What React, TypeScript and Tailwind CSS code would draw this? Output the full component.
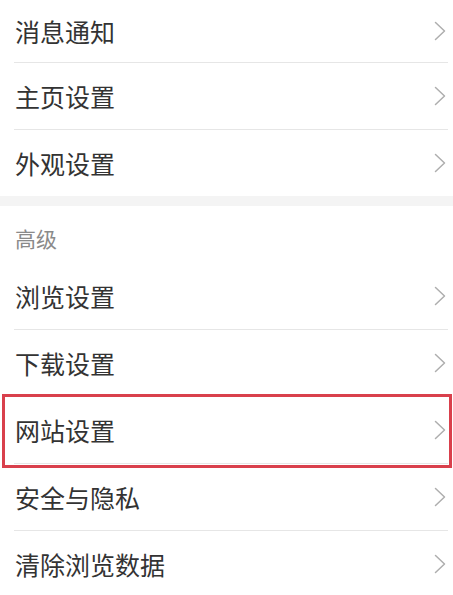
import React from "react";

const Chevron = () => (
  <svg width="12" height="20" viewBox="0 0 12 20" className="shrink-0">
    <polyline points="1.5,1.5 10.5,10 1.5,18.5" fill="none" stroke="#aeaeae" strokeWidth="1.5" strokeLinecap="round" strokeLinejoin="round" />
  </svg>
);

const Row = ({ label, h = "h-[66px]", highlight = false }: { label: string; h?: string; highlight?: boolean }) => (
  <div className={`relative flex items-center justify-between pl-[15px] pr-[7px] ${h}`}>
    <span className="text-[25px] leading-none text-[#333333]">{label}</span>
    <Chevron />
    {highlight && (
      <div className="pointer-events-none absolute -top-[3px] -bottom-[5px] left-[2px] right-[1px] border-[3px] border-[#d9404c]" />
    )}
  </div>
);

const Sep = () => <div className="ml-[14px] mr-[5px] h-px bg-[#e6e6e6]" />;

export default function App() {
  return (
    <div className="w-[453px] h-[595px] overflow-hidden bg-white" style={{ fontFamily: '"Noto Sans CJK SC", "Noto Sans", sans-serif' }}>
      <Row label="消息通知" h="h-[62px]" />
      <Sep />
      <Row label="主页设置" />
      <Sep />
      <Row label="外观设置" />
      <div className="h-[10px] bg-[#f4f4f4]" />
      <div className="flex h-[57px] items-center pl-[15px] pt-[8px]">
        <span className="text-[21px] leading-none text-[#8a8a8a]">高级</span>
      </div>
      <Row label="浏览设置" />
      <Sep />
      <Row label="下载设置" />
      <Sep />
      <Row label="网站设置" highlight />
      <Sep />
      <Row label="安全与隐私" />
      <Sep />
      <Row label="清除浏览数据" />
    </div>
  );
}
